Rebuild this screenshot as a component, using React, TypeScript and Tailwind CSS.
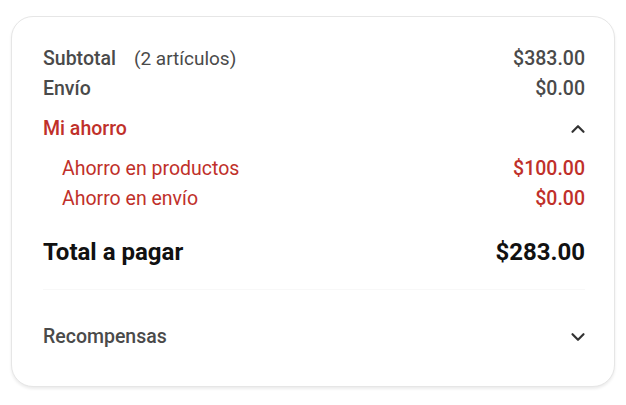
import { ChevronDown, ChevronUp } from 'lucide-react';

const font = { fontFamily: 'Roboto, "Noto Sans", sans-serif' };

export default function App() {
  return (
    <div className="w-[626px] h-[405px] bg-white pt-[16px] pl-[11px]" style={font}>
      <div className="w-[604px] h-[371px] rounded-[22px] border border-[#e6e6e6] shadow-[0_2px_3px_rgba(0,0,0,0.08)] bg-white pl-[31px] pr-[29px] pt-[27px] flex flex-col">
        <div className="flex items-center justify-between h-[30px] text-[19.5px] text-[#4a4a4a]">
          <div className="flex items-baseline">
            <span className="font-medium">Subtotal</span>
            <span className="ml-[18px] text-[19px]">(2 artículos)</span>
          </div>
          <span className="font-medium">$383.00</span>
        </div>
        <div className="flex items-center justify-between h-[30px] text-[19.5px] text-[#4a4a4a] font-medium">
          <span>Envío</span>
          <span>$0.00</span>
        </div>
        <div className="flex items-center justify-between h-[30px] mt-[10px] text-[19.5px] text-[#c0302a] font-medium">
          <span>Mi ahorro</span>
          <ChevronUp className="w-[22px] h-[22px] text-[#333] mr-[-4px]" strokeWidth={2.4} />
        </div>
        <div className="flex items-center justify-between h-[30px] mt-[10px] pl-[19px] text-[19.5px] text-[#c0302a]">
          <span>Ahorro en productos</span>
          <span className="font-medium">$100.00</span>
        </div>
        <div className="flex items-center justify-between h-[30px] pl-[19px] text-[19.5px] text-[#c0302a]">
          <span>Ahorro en envío</span>
          <span className="font-medium">$0.00</span>
        </div>
        <div className="flex items-center justify-between h-[32px] mt-[22px] text-[24px] text-[#111] font-bold">
          <span>Total a pagar</span>
          <span>$283.00</span>
        </div>
        <div className="h-px bg-[#f8f8f8] mt-[21px]" />
        <div className="flex items-center justify-between h-[30px] mt-[32px] text-[19.5px] text-[#4a4a4a] font-medium">
          <span>Recompensas</span>
          <ChevronDown className="w-[22px] h-[22px] text-[#333] mr-[-4px]" strokeWidth={2.4} />
        </div>
      </div>
    </div>
  );
}
